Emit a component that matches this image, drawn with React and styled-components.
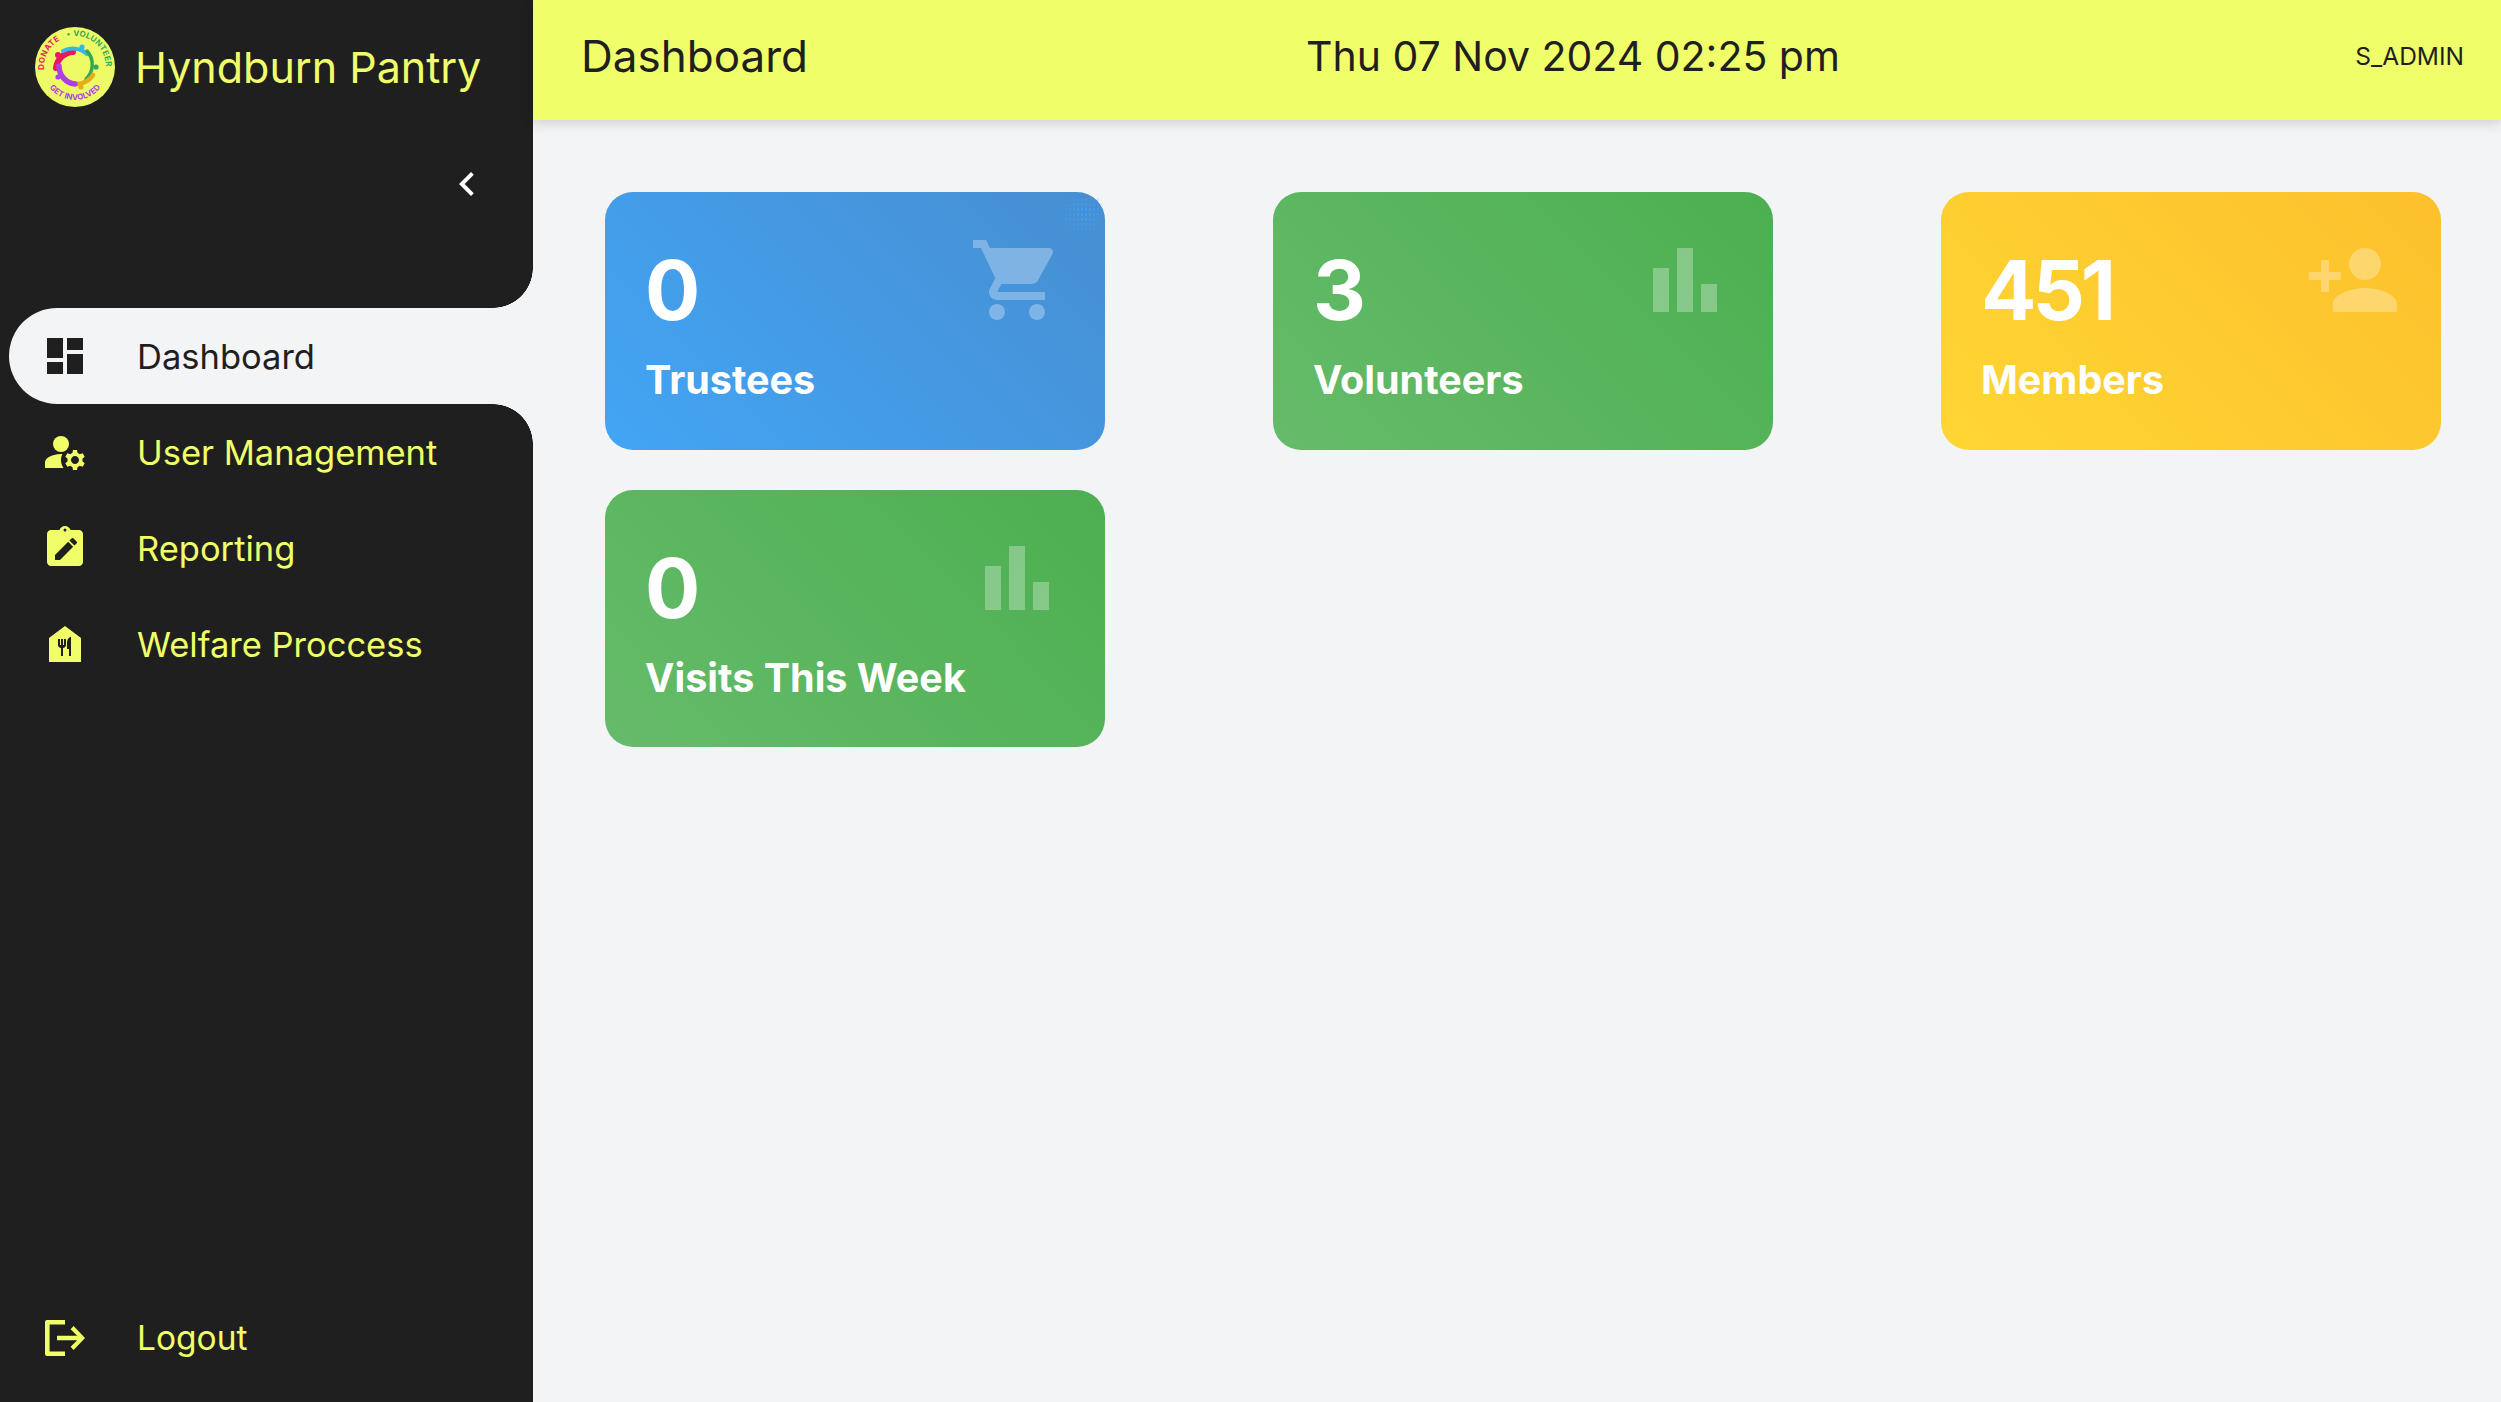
import React from 'react'
import styled, { createGlobalStyle } from 'styled-components'

const DARK = '#1f1f1f'
const LIGHT = '#f3f4f6'
const LIME = '#f0ff69'

const GlobalStyle = createGlobalStyle`
  html, body { margin: 0; padding: 0; height: 100%; background: ${LIGHT}; }
  body { font-family: Inter, "Liberation Sans", sans-serif; overflow: hidden; }
  #root { height: 100%; }
`

const Page = styled.div`
  display: flex;
  width: 2501px;
  height: 1402px;
`

const Sidebar = styled.aside`
  flex: 0 0 533px;
  display: flex;
  flex-direction: column;
  background: ${DARK};
`

const Brand = styled.div`
  display: flex;
  align-items: center;
  gap: 20px;
  padding: 27px 0 0 35px;
`

const BrandName = styled.span`
  font-size: 43px;
  color: ${LIME};
  white-space: nowrap;
`

const ToggleRow = styled.div`
  display: flex;
  justify-content: flex-end;
  padding: 53px 42px 100px 0;
  color: #fff;
`

const NavItem = styled.div`
  position: relative;
  display: flex;
  align-items: center;
  gap: 48px;
  height: 96px;
  margin-left: 9px;
  padding-left: 32px;
  font-size: 34.5px;
  color: ${(p) => (p.$active ? DARK : LIME)};
  background: ${(p) => (p.$active ? LIGHT : 'transparent')};
  border-radius: ${(p) => (p.$active ? '48px 0 0 48px' : '0')};

  ${(p) => p.$active && `
    &::before, &::after {
      content: '';
      position: absolute;
      right: 0;
      width: 40px;
      height: 40px;
    }
    &::before {
      bottom: 100%;
      background: radial-gradient(circle at 0 0, ${DARK} 39.5px, ${LIGHT} 40px);
    }
    &::after {
      top: 100%;
      background: radial-gradient(circle at 0 100%, ${DARK} 39.5px, ${LIGHT} 40px);
    }
  `}
`

const LogoutItem = styled(NavItem)`
  margin-top: auto;
  margin-bottom: 16px;
  font-size: 33.5px;
`

const Main = styled.div`
  flex: 1;
  display: flex;
  flex-direction: column;
  min-width: 0;
`

const Header = styled.header`
  display: flex;
  align-items: center;
  box-sizing: border-box;
  height: 120px;
  padding: 0 37px 8px 48px;
  background: ${LIME};
  color: ${DARK};
  box-shadow: 0 3px 12px rgba(0, 0, 0, 0.16);
`

const HeaderTitle = styled.h1`
  margin: 0;
  font-size: 44px;
  font-weight: 400;
`

const HeaderDate = styled.div`
  margin-left: 498px;
  font-size: 41px;
  white-space: nowrap;
`

const HeaderUser = styled.div`
  margin-left: auto;
  font-size: 24.5px;
`

const CardGrid = styled.section`
  display: grid;
  grid-template-columns: repeat(3, 500px);
  grid-auto-rows: 257.5px;
  column-gap: 168px;
  row-gap: 40px;
  padding: 72px 0 0 72px;
`

const tones = {
  blue: 'linear-gradient(45deg, #42a5f5, #478ed1)',
  green: 'linear-gradient(45deg, #66bb6a, #4caf50)',
  yellow: 'linear-gradient(45deg, #ffd633, #fcc02d)',
}

const Card = styled.article`
  position: relative;
  padding: 40px;
  border-radius: 28px;
  color: #fff;
  background: ${(p) => tones[p.$tone]};
`

const CardValue = styled.div`
  margin-top: 9px;
  font-size: 82px;
  font-weight: 700;
  line-height: 100px;
  letter-spacing: -4px;
`

const CardLabel = styled.div`
  margin-top: 16px;
  font-size: 39.5px;
  font-weight: 700;
  line-height: 46px;
`

const CardIcon = styled.svg`
  position: absolute;
  top: 40px;
  right: 40px;
  width: 96px;
  height: 96px;
  fill: #fff;
  opacity: 0.3;
`

// speckle in the corner of the blue card
const CornerSpeckle = styled.span`
  position: absolute;
  top: 5px;
  right: 3px;
  width: 50px;
  height: 46px;
  background-image: radial-gradient(#3f9ff0 1px, transparent 1.3px);
  background-size: 4px 5px;
  -webkit-mask-image: radial-gradient(circle at 62% 38%, #000 10%, transparent 58%);
  mask-image: radial-gradient(circle at 62% 38%, #000 10%, transparent 58%);
`

const NavIcon = styled.svg`
  flex: 0 0 48px;
  width: 48px;
  height: 48px;
  fill: currentColor;
`

const LogoBadge = styled.svg`
  flex: 0 0 80px;
  width: 80px;
  height: 80px;
`

const Icon = ({ as: Comp = NavIcon, children }) => (
  <Comp viewBox="0 0 24 24" aria-hidden="true">{children}</Comp>
)

const DashboardIcon = () => (
  <Icon><path d="M3 13h8V3H3v10zm0 8h8v-6H3v6zm10 0h8V11h-8v10zm0-18v6h8V3h-8z" /></Icon>
)

const UsersIcon = () => (
  <Icon>
    <circle cx="10" cy="8" r="4" />
    <path d="M10.67 13.02c-.22-.01-.44-.02-.67-.02-2.42 0-4.68.67-6.61 1.82-.88.52-1.39 1.5-1.39 2.53V20h9.26c-.79-1.13-1.26-2.51-1.26-4 0-1.07.25-2.07.67-2.98z" />
    <path d="M20.75 16c0-.22-.03-.42-.06-.63l1.14-1.01-1-1.73-1.45.49c-.32-.27-.68-.48-1.08-.63L18 11h-2l-.3 1.49c-.4.15-.76.36-1.08.63l-1.45-.49-1 1.73 1.14 1.01c-.03.21-.06.41-.06.63s.03.42.06.63l-1.14 1.01 1 1.73 1.45-.49c.32.27.68.48 1.08.63L16 21h2l.3-1.49c.4-.15.76-.36 1.08-.63l1.45.49 1-1.73-1.14-1.01c.03-.21.06-.41.06-.63zM17 18c-1.1 0-2-.9-2-2s.9-2 2-2 2 .9 2 2-.9 2-2 2z" />
  </Icon>
)

const ReportIcon = () => (
  <Icon>
    <path d="M19 3h-4.18C14.4 1.84 13.3 1 12 1s-2.4.84-2.82 2H5c-1.1 0-2 .9-2 2v14c0 1.1.9 2 2 2h14c1.1 0 2-.9 2-2V5c0-1.1-.9-2-2-2z" />
    <circle cx="12" cy="3" r=".75" fill={DARK} />
    <path fill={DARK} d="M7 15.5V18h2.5l6.6-6.6-2.5-2.5L7 15.5zm10.8-5.8c.26-.26.26-.68 0-.94l-1.56-1.56c-.26-.26-.68-.26-.94 0l-1.1 1.1 2.5 2.5 1.1-1.1z" />
  </Icon>
)

const FoodBankIcon = () => (
  <Icon><path d="M12 3L4 9v12h16V9l-8-6zm.5 9.5c0 .83-.67 1.5-1.5 1.5v4h-1v-4c-.83 0-1.5-.67-1.5-1.5v-3h1v3h.5v-3h1v3h.5v-3h1v3zM15 18h-1v-3.5h-1v-3c0-1.66.9-3 2-3V18z" /></Icon>
)

const LogoutIcon = () => (
  <Icon>
    <path d="M2 4c0-.55.45-1 1-1h9v2.2H4.3v13.6H12V21H3c-.55 0-1-.45-1-1V4z" />
    <path d="M8 10.9h10.1l-3.3-3.3L16.3 6 22 12l-5.7 6-1.5-1.6 3.3-3.3H8v-2.2z" />
  </Icon>
)

const ChevronIcon = () => (
  <Icon><path d="M15.41 7.41 14 6l-6 6 6 6 1.41-1.41L10.83 12z" /></Icon>
)

const CartIcon = () => (
  <Icon as={CardIcon}><path d="M7 18c-1.1 0-1.99.9-1.99 2S5.9 22 7 22s2-.9 2-2-.9-2-2-2zM1 2v2h2l3.6 7.59-1.35 2.45c-.16.28-.25.61-.25.96 0 1.1.9 2 2 2h12v-2H7.42c-.14 0-.25-.11-.25-.25l.03-.12.9-1.63h7.45c.75 0 1.41-.41 1.75-1.03l3.58-6.49c.08-.14.12-.31.12-.48 0-.55-.45-1-1-1H5.21l-.94-2H1zm16 16c-1.1 0-1.99.9-1.99 2s.89 2 1.99 2 2-.9 2-2-.9-2-2-2z" /></Icon>
)

const BarsIcon = () => (
  <Icon as={CardIcon}><path d="M4 9h4v11H4zm12 4h4v7h-4zm-6-9h4v16h-4z" /></Icon>
)

const PersonAddIcon = () => (
  <Icon as={CardIcon}><path d="M15 12c2.21 0 4-1.79 4-4s-1.79-4-4-4-4 1.79-4 4 1.79 4 4 4zm-9-2V7H4v3H1v2h3v3h2v-3h3v-2H6zm9 4c-2.67 0-8 1.34-8 4v2h16v-2c0-2.66-5.33-4-8-4z" /></Icon>
)

// round badge: lettering on arcs and five coloured figures in a ring
const Logo = () => (
  <LogoBadge viewBox="0 0 80 80" aria-hidden="true">
    <defs>
      <path id="arcTop" d="M9.3 44 A31 31 0 1 1 69.4 50" />
      <path id="arcBottom" d="M9.7 53 A33 33 0 0 0 70.3 53" />
    </defs>
    <circle cx="40" cy="40" r="40" fill="#ecfb66" />
    <text fontFamily="Inter, sans-serif" fontSize="8" fontWeight="700" letterSpacing=".4">
      <textPath href="#arcTop" startOffset="1%" fill="#e8195f">DONATE</textPath>
    </text>
    <text fontFamily="Inter, sans-serif" fontSize="8" fontWeight="700" letterSpacing=".2">
      <textPath href="#arcTop" startOffset="40%" fill="#35a853">• VOLUNTEER</textPath>
    </text>
    <text fontFamily="Inter, sans-serif" fontSize="8" fontWeight="700" textAnchor="middle">
      <textPath href="#arcBottom" startOffset="50%" fill="#b03ee8">GET INVOLVED</textPath>
    </text>
    <g fill="none" strokeLinecap="round">
      <path d="M21 41 A18 18 0 0 1 38 25" stroke="#e8195f" strokeWidth="6" />
      <path d="M28 24 A21 21 0 0 1 52 27" stroke="#35b6e8" strokeWidth="4" />
      <path d="M52 24 A20 20 0 0 1 51 52" stroke="#35a853" strokeWidth="3.5" />
      <path d="M58 48 A20 20 0 0 1 35 56" stroke="#e3ad1c" strokeWidth="4.5" />
      <path d="M24 39 A18 18 0 0 0 40 57" stroke="#b03ee8" strokeWidth="5.5" />
    </g>
    <circle cx="23" cy="28" r="3" fill="#e8195f" />
    <circle cx="47" cy="20" r="2.6" fill="#35b6e8" />
    <circle cx="61" cy="40" r="2.6" fill="#35a853" />
    <circle cx="46" cy="60" r="2.6" fill="#e3ad1c" />
    <circle cx="23" cy="50" r="2.6" fill="#b03ee8" />
  </LogoBadge>
)

const navItems = [
  { label: 'Dashboard', icon: <DashboardIcon />, active: true },
  { label: 'User Management', icon: <UsersIcon /> },
  { label: 'Reporting', icon: <ReportIcon /> },
  { label: 'Welfare Proccess', icon: <FoodBankIcon /> },
]

const cards = [
  { value: 0, label: 'Trustees', tone: 'blue', icon: <CartIcon />, speckle: true },
  { value: 3, label: 'Volunteers', tone: 'green', icon: <BarsIcon /> },
  { value: 451, label: 'Members', tone: 'yellow', icon: <PersonAddIcon /> },
  { value: 0, label: 'Visits This Week', tone: 'green', icon: <BarsIcon /> },
]

export default function App() {
  return (
    <Page>
      <GlobalStyle />
      <Sidebar>
        <Brand>
          <Logo />
          <BrandName>Hyndburn Pantry</BrandName>
        </Brand>
        <ToggleRow><ChevronIcon /></ToggleRow>
        {navItems.map((item) => (
          <NavItem key={item.label} $active={item.active}>
            {item.icon}
            {item.label}
          </NavItem>
        ))}
        <LogoutItem>
          <LogoutIcon />
          Logout
        </LogoutItem>
      </Sidebar>
      <Main>
        <Header>
          <HeaderTitle>Dashboard</HeaderTitle>
          <HeaderDate>Thu 07 Nov 2024 02:25 pm</HeaderDate>
          <HeaderUser>S_ADMIN</HeaderUser>
        </Header>
        <CardGrid>
          {cards.map((card) => (
            <Card key={card.label} $tone={card.tone}>
              {card.speckle && <CornerSpeckle />}
              <CardValue>{card.value}</CardValue>
              <CardLabel>{card.label}</CardLabel>
              {card.icon}
            </Card>
          ))}
        </CardGrid>
      </Main>
    </Page>
  )
}
